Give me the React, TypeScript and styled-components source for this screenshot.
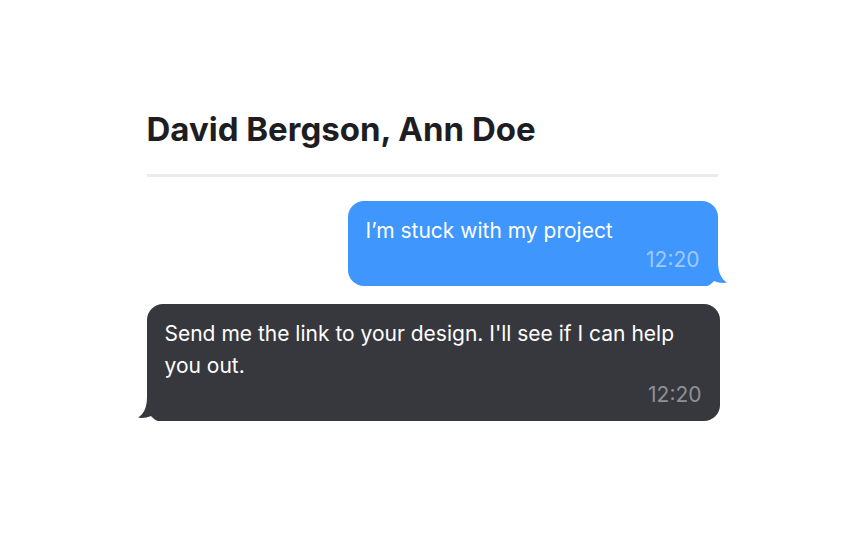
import styled, { createGlobalStyle } from "styled-components";

const GlobalStyle = createGlobalStyle`
  body {
    margin: 0;
    background: #ffffff;
    font-family: Inter, "Noto Sans", sans-serif;
  }
`;

const StyledPage = styled.div`
  display: flex;
  justify-content: center;
  padding-top: 109px;
`;

const StyledChat = styled.div`
  display: flex;
  flex-direction: column;
  width: 571px;
`;

const StyledTitle = styled.h1`
  margin: 0;
  font-size: 33px;
  line-height: 40px;
  font-weight: 700;
  color: #1d1d22;
`;

const StyledDivider = styled.div`
  height: 3px;
  background-color: #ebebeb;
  margin: 25px 0 24px;
`;

const StyledList = styled.div`
  display: flex;
  flex-direction: column;
  gap: 18px;
`;

const StyledBubble = styled.div<{ $mine: boolean }>`
  position: relative;
  align-self: ${(p) => (p.$mine ? "flex-end" : "flex-start")};
  width: ${(p) => (p.$mine ? "370px" : "573px")};
  box-sizing: border-box;
  padding: 14px 18px 13px;
  border-radius: 16px;
  background-color: ${(p) => (p.$mine ? "#3f96fd" : "#37383e")};
  color: #ffffff;
`;

const StyledText = styled.div`
  font-size: 21px;
  line-height: 32px;
`;

const StyledTime = styled.div<{ $mine: boolean }>`
  text-align: right;
  font-size: 21px;
  line-height: 26px;
  color: ${(p) => (p.$mine ? "rgba(255,255,255,0.5)" : "rgba(255,255,255,0.45)")};
`;

const StyledTail = styled.svg<{ $mine: boolean }>`
  position: absolute;
  bottom: -2px;
  width: 30px;
  height: 26px;
  ${(p) => (p.$mine ? "right: -11px;" : "left: -11px; transform: scaleX(-1);")}
`;

type Message = {
  mine: boolean;
  text: string;
  time: string;
};

const messages: Message[] = [
  { mine: true, text: "I’m stuck with my project", time: "12:20" },
  {
    mine: false,
    text: "Send me the link to your design. I'll see if I can help you out.",
    time: "12:20",
  },
];

const Bubble = ({ mine, text, time }: Message) => (
  <StyledBubble $mine={mine}>
    <StyledText>{text}</StyledText>
    <StyledTime $mine={mine}>{time}</StyledTime>
    <StyledTail $mine={mine} viewBox="0 0 30 26">
      <path
        d="M0 0 H19 C19 10 22 17 28 20.5 C25 21.5 19 21 15 19 C13 21 11 23.5 8 24 H0 Z"
        fill={mine ? "#3f96fd" : "#37383e"}
      />
    </StyledTail>
  </StyledBubble>
);

export default function App() {
  return (
    <>
      <GlobalStyle />
      <StyledPage>
        <StyledChat>
          <StyledTitle>David Bergson, Ann Doe</StyledTitle>
          <StyledDivider />
          <StyledList>
            {messages.map((m, i) => (
              <Bubble key={i} {...m} />
            ))}
          </StyledList>
        </StyledChat>
      </StyledPage>
    </>
  );
}
